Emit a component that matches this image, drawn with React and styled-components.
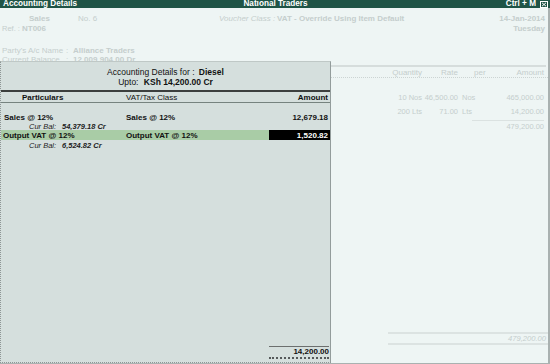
import React from "react";
import styled, { createGlobalStyle } from "styled-components";

const GlobalStyle = createGlobalStyle`
  html, body { margin: 0; padding: 0; background: #eef5f4; }
  #root { width: 550px; height: 364px; }
`;

const Screen = styled.div`
  position: relative;
  width: 550px;
  height: 364px;
  overflow: hidden;
  display: flex;
  flex-direction: column;
  background: #eef5f4;
  font-family: "Liberation Sans", Arial, sans-serif;
  font-size: 8px;
  color: #111;
`;

const TitleBar = styled.header`
  flex: none;
  height: 8px;
  display: grid;
  grid-template-columns: 1fr auto 1fr;
  align-items: center;
  padding: 0 2px 0 3px;
  background: #1f5446;
  color: #fff;
  font-weight: bold;
  font-size: 8.2px;
  line-height: 8px;
  overflow: hidden;
  white-space: nowrap;
`;

const TitleRight = styled.div`
  display: flex;
  justify-content: flex-end;
  align-items: center;
  gap: 4px;
`;

const Voucher = styled.main`
  flex: 1;
  min-height: 0;
  display: flex;
  flex-direction: column;
  border-right: 2px solid #a9b1b0;
  border-bottom: 1px solid #a9b1b0;
  color: #c5cecd;
`;

const InfoBlock = styled.div`
  padding-top: 5px;
  display: flex;
  flex-direction: column;
`;

const InfoRow = styled.div`
  display: flex;
  align-items: center;
  height: ${(p) => p.$h || 10}px;
  margin-top: ${(p) => p.$mt || 0}px;
  padding: 0 3px 0 2px;
  white-space: nowrap;
`;

const Field = styled.span`
  flex: none;
  width: ${(p) => (p.$w ? `${p.$w}px` : "auto")};
  font-size: ${(p) => p.$fs || 8}px;
  font-weight: ${(p) => (p.$bold ? "bold" : "normal")};
  font-style: ${(p) => (p.$italic ? "italic" : "normal")};
`;

const Spacer = styled.span`
  flex: 1;
`;

const TableRule = styled.div`
  margin: 1px 2px 0 2px;
  height: 2px;
  background: #d6dddc;
`;

const TableRow = styled.div`
  display: grid;
  grid-template-columns: 1fr 58px 36px 14px 72px;
  align-items: center;
  height: ${(p) => p.$h || 14}px;
  padding-right: 4px;
  white-space: nowrap;
  font-size: ${(p) => p.$fs || 7.5}px;
  border-bottom: ${(p) => (p.$dotted ? "1px dotted #ccd4d3" : "none")};
`;

const TCell = styled.span`
  text-align: ${(p) => p.$align || "right"};
  padding-left: ${(p) => p.$pl || 0}px;
  overflow: visible;
`;

const TableBody = styled.div`
  padding-top: ${(p) => p.$pt}px;
  display: flex;
  flex-direction: column;
`;

const SubRule = styled.div`
  align-self: flex-end;
  width: 72px;
  margin-right: 4px;
  margin-top: 2px;
  border-top: 1px solid #dbe2e1;
`;

const SubTotal = styled.div`
  align-self: flex-end;
  margin-right: 4px;
  height: 11px;
  line-height: 11px;
  font-size: 7.5px;
`;

const Footer = styled.div`
  margin-top: auto;
  margin-bottom: 18px;
  align-self: flex-end;
  width: 158px;
  height: 9px;
  line-height: 9px;
  border-top: 2px solid #dce3e2;
  border-bottom: 2px solid #dce3e2;
  text-align: right;
  font-style: italic;
  font-size: 7.6px;
  padding-right: 2px;
  box-sizing: content-box;
`;

/* ----- modal ----- */

const Modal = styled.section`
  position: absolute;
  left: 0;
  top: 61px;
  width: 331px;
  height: 302px;
  box-sizing: border-box;
  background: #d5dfdd;
  border-top: 1px solid #bfc8c6;
  border-left: 1px dotted #8e9695;
  border-right: 1px solid #939c9b;
  border-bottom: 1px dotted #8e9695;
  display: flex;
  flex-direction: column;
  color: #111;
`;

const Heading = styled.div`
  padding-top: 5px;
  display: flex;
  flex-direction: column;
  align-items: center;
  font-size: 8.5px;
  line-height: 10px;
  white-space: nowrap;
`;

const Strong = styled.b`
  font-weight: bold;
  margin-left: ${(p) => p.$ml || 0}px;
`;

const HeavyRule = styled.div`
  margin-top: 3px;
  height: 2px;
  background: #3c3f3e;
`;

const GridRow = styled.div`
  display: grid;
  grid-template-columns: 125px 143px 61px;
  align-items: stretch;
  height: ${(p) => p.$h}px;
  margin-top: ${(p) => p.$mt || 0}px;
  background: ${(p) => p.$bg || "transparent"};
  border-bottom: ${(p) => (p.$rule ? "1px solid #76837f" : "none")};
  white-space: nowrap;
  font-size: 8px;
`;

const Cell = styled.div`
  display: flex;
  align-items: center;
  justify-content: ${(p) => (p.$right ? "flex-end" : "flex-start")};
  padding-left: ${(p) => p.$pl || 0}px;
  padding-right: ${(p) => p.$pr || 0}px;
  font-weight: ${(p) => (p.$bold ? "bold" : "normal")};
  background: ${(p) => (p.$dark ? "#000" : "transparent")};
  color: ${(p) => (p.$dark ? "#fff" : "inherit")};
`;

const BalanceLine = styled.div`
  display: flex;
  align-items: center;
  height: ${(p) => p.$h}px;
  padding-left: 28px;
  font-size: 7.5px;
  font-style: italic;
  color: #222;
  white-space: nowrap;
`;

const BalLabel = styled.span`
  width: 33px;
`;

const BalValue = styled.span`
  font-weight: bold;
`;

const TotalRow = styled.div`
  margin-top: auto;
  margin-bottom: 3px;
  display: flex;
  justify-content: flex-end;
  padding-right: 1px;
`;

const TotalBox = styled.div`
  width: 60px;
  height: 10px;
  line-height: 10px;
  text-align: right;
  font-weight: bold;
  font-size: 8px;
  border-top: 1px solid #6c6f6e;
  border-bottom: 2px dotted #55595a;
`;

function CloseIcon() {
  return (
    <svg width="8" height="7" viewBox="0 0 8 7">
      <rect x="0.5" y="0.5" width="7" height="6" fill="none" stroke="#fff" />
      <path d="M2 1.8 L6 5.2 M6 1.8 L2 5.2" stroke="#fff" strokeWidth="1" />
    </svg>
  );
}

export default function App() {
  return (
    <>
      <GlobalStyle />
      <Screen>
        <TitleBar>
          <span>Accounting Details</span>
          <span>National Traders</span>
          <TitleRight>
            <span>Ctrl + M</span>
            <CloseIcon />
          </TitleRight>
        </TitleBar>

        <Voucher>
          <InfoBlock>
            <InfoRow>
              <Field $w={27} />
              <Field $w={49} $bold>Sales</Field>
              <Field $w={141}>No. 6</Field>
              <Field $w={58} $italic>Voucher Class :</Field>
              <Field $bold>VAT - Override Using Item Default</Field>
              <Spacer />
              <Field $bold>14-Jan-2014</Field>
            </InfoRow>
            <InfoRow>
              <Field $w={20} $fs={7.5}>Ref. :</Field>
              <Field $bold>NT006</Field>
              <Spacer />
              <Field $bold>Tuesday</Field>
            </InfoRow>
            <InfoRow $mt={12}>
              <Field $w={64}>Party's A/c Name</Field>
              <Field $w={7}>:</Field>
              <Field $bold>Alliance Traders</Field>
            </InfoRow>
            <InfoRow $h={9}>
              <Field $w={64}>Current Balance</Field>
              <Field $w={7}>:</Field>
              <Field $bold>12,009,904.00 Dr</Field>
            </InfoRow>
          </InfoBlock>

          <TableRule />
          <TableRow $h={10} $fs={8} $dotted>
            <TCell />
            <TCell>Quantity</TCell>
            <TCell>Rate</TCell>
            <TCell $align="left" $pl={16}>per</TCell>
            <TCell>Amount</TCell>
          </TableRow>

          <TableBody $pt={12}>
            <TableRow>
              <TCell />
              <TCell>10 Nos</TCell>
              <TCell>46,500.00</TCell>
              <TCell $align="left" $pl={4}>Nos</TCell>
              <TCell>465,000.00</TCell>
            </TableRow>
            <TableRow>
              <TCell />
              <TCell>200 Lts</TCell>
              <TCell>71.00</TCell>
              <TCell $align="left" $pl={4}>Lts</TCell>
              <TCell>14,200.00</TCell>
            </TableRow>
            <SubRule />
            <SubTotal>479,200.00</SubTotal>
          </TableBody>

          <Footer>479,200.00</Footer>
        </Voucher>

        <Modal>
          <Heading>
            <span>
              Accounting Details for : <Strong $ml={2}>Diesel</Strong>
            </span>
            <span>
              Upto: <Strong $ml={3}>KSh 14,200.00 Cr</Strong>
            </span>
          </Heading>
          <HeavyRule />
          <GridRow $h={10} $rule>
            <Cell $pl={21} $bold>Particulars</Cell>
            <Cell>VAT/Tax Class</Cell>
            <Cell $right $pr={2} $bold>Amount</Cell>
          </GridRow>

          <GridRow $h={9} $mt={10}>
            <Cell $pl={3} $bold>Sales @ 12%</Cell>
            <Cell $bold>Sales @ 12%</Cell>
            <Cell $right $pr={2} $bold>12,679.18</Cell>
          </GridRow>
          <BalanceLine $h={8}>
            <BalLabel>Cur Bal:</BalLabel>
            <BalValue>54,379.18 Cr</BalValue>
          </BalanceLine>
          <GridRow $h={10} $bg="#a9cca6">
            <Cell $pl={2} $bold>Output VAT @ 12%</Cell>
            <Cell $bold>Output VAT @ 12%</Cell>
            <Cell $right $pr={2} $bold $dark>1,520.82</Cell>
          </GridRow>
          <BalanceLine $h={10}>
            <BalLabel>Cur Bal:</BalLabel>
            <BalValue>6,524.82 Cr</BalValue>
          </BalanceLine>

          <TotalRow>
            <TotalBox>14,200.00</TotalBox>
          </TotalRow>
        </Modal>
      </Screen>
    </>
  );
}
